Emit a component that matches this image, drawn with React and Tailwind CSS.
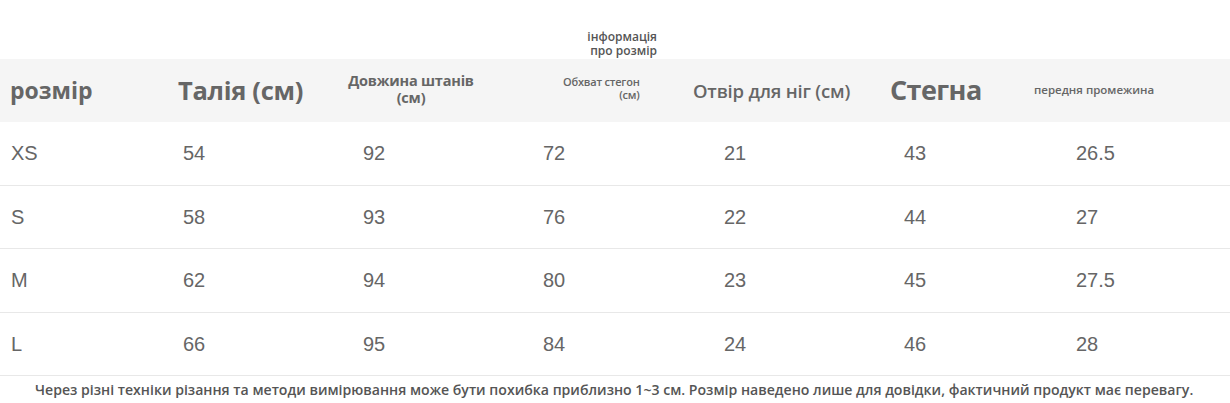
export default function App() {
  const rows = [
    ["XS", "54", "92", "72", "21", "43", "26.5"],
    ["S", "58", "93", "76", "22", "44", "27"],
    ["M", "62", "94", "80", "23", "45", "27.5"],
    ["L", "66", "95", "84", "24", "46", "28"],
  ];
  const pads = ["pl-[11px]", "pl-[9px]", "pl-[9px]", "pl-[9px]", "pl-[10px]", "pl-[10px]", "pl-[2px]"];
  const os = { fontFamily: '"Open Sans", "Noto Sans", sans-serif' };
  return (
    <div className="w-[1230px] h-[403px] bg-white text-[#666] overflow-hidden">
      <div className="h-[59px] flex items-end pb-[2px]">
        <div
          className="w-[657px] text-right text-[12px] leading-[13.5px] font-semibold text-[#555]"
          style={os}
        >
          <div>інформація</div>
          <div>про розмір</div>
        </div>
      </div>
      <div className="h-[63px] bg-[#f5f5f5] flex items-center" style={os}>
        <div className="w-[178px] pl-[10px] text-[23px] font-bold">розмір</div>
        <div className="w-[169px] text-[25.5px] font-bold tracking-[-0.3px]">Талія (см)</div>
        <div className="w-[216px]">
          <div className="w-[128px] text-center text-[14.5px] leading-[17px] font-bold pb-[4px] whitespace-nowrap tracking-[-0.2px]">
            Довжина штанів
            <br />
            (см)
          </div>
        </div>
        <div className="w-[130px]">
          <div className="inline-block text-right text-[11px] leading-[12.5px] font-semibold tracking-[-0.2px] pb-[2px] whitespace-nowrap">
            Обхват стегон
            <br />
            (см)
          </div>
        </div>
        <div className="w-[197px] text-[18.5px] font-semibold tracking-[-0.2px] whitespace-nowrap">Отвір для ніг (см)</div>
        <div className="w-[144px] text-[27px] font-bold tracking-[-0.6px]">Стегна</div>
        <div className="flex-1 text-[11.5px] font-semibold pb-[2px] whitespace-nowrap">передня промежина</div>
      </div>
      {rows.map((r) => (
        <div
          key={r[0]}
          className="h-[63.5px] grid grid-cols-[174px_180px_180px_180px_180px_180px_1fr] items-center border-b border-[#e8e8e8] text-[20px]"
          style={{ fontFamily: '"Liberation Sans", Arial, sans-serif' }}
        >
          {r.map((c, i) => (
            <div key={i} className={pads[i]}>
              {c}
            </div>
          ))}
        </div>
      ))}
      <div
        className="pl-[35px] pt-[3px] text-[14.1px] font-semibold text-[#555] whitespace-nowrap"
        style={os}
      >
        Через різні техніки різання та методи вимірювання може бути похибка приблизно 1~3 см. Розмір наведено лише для довідки, фактичний продукт має перевагу.
      </div>
    </div>
  );
}
